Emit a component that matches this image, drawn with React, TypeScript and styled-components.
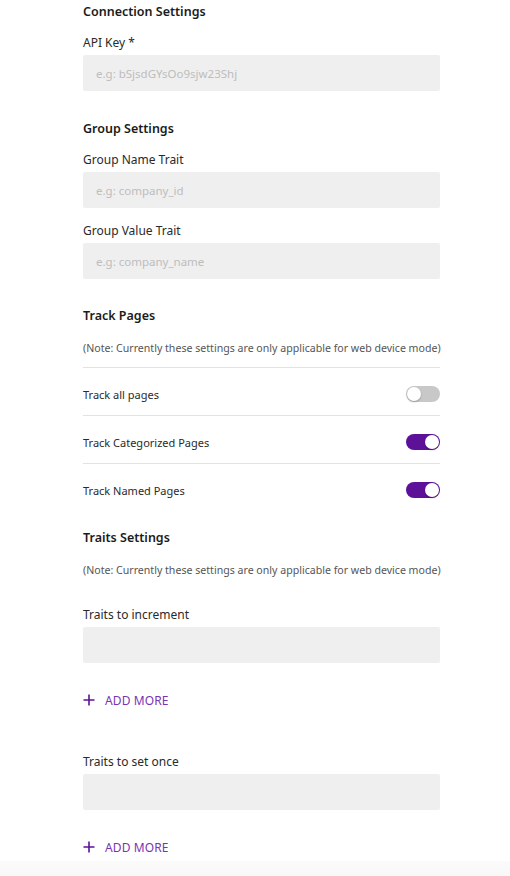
import React, { useState } from "react";
import styled, { createGlobalStyle } from "styled-components";

const Global = createGlobalStyle`
  html, body { margin: 0; padding: 0; background: #fff; }
  body { font-family: "Noto Sans", "Open Sans", sans-serif; color: #222; }
  * { box-sizing: border-box; }
`;

const Page = styled.div`
  width: 510px;
  min-height: 876px;
  display: flex;
  flex-direction: column;
`;

const Content = styled.div`
  flex: 1;
  padding: 2px 0 4px 83px;
  width: 440px;
  display: flex;
  flex-direction: column;
`;

const Footer = styled.div`
  height: 15px;
  background: linear-gradient(#fbfbfb, #f8f8f8);
`;

const SectionTitle = styled.div<{ $mt?: number }>`
  font-size: 12.5px;
  font-weight: 600;
  line-height: 20px;
  color: #1b1b1b;
  margin-top: ${(p) => p.$mt ?? 0}px;
`;

const Label = styled.div<{ $mt?: number }>`
  font-size: 12px;
  line-height: 20px;
  color: #2a2a2a;
  margin-top: ${(p) => p.$mt ?? 0}px;
  margin-bottom: 2px;
`;

const Input = styled.input`
  display: block;
  width: 357px;
  height: 36px;
  border: none;
  outline: none;
  background: #efefef;
  border-radius: 2px;
  padding: 0 13px;
  font-family: inherit;
  font-size: 11.5px;
  color: #333;
  &::placeholder { color: #bdbdbd; }
`;

const Note = styled.div<{ $mt?: number }>`
  font-size: 10.6px;
  line-height: 20px;
  color: #555;
  margin-top: ${(p) => p.$mt ?? 0}px;
  white-space: nowrap;
`;

const ToggleList = styled.div`
  margin-top: 9px;
  width: 357px;
  display: flex;
  flex-direction: column;
`;

const ToggleRow = styled.div`
  display: flex;
  align-items: center;
  justify-content: space-between;
  border-top: 1px solid #e2e2e2;
  padding: 18px 0 13px;
  height: 48px;
  font-size: 11px;
  color: #2a2a2a;
`;

const Track = styled.button<{ $on: boolean }>`
  position: relative;
  width: 34px;
  height: 16px;
  border: none;
  padding: 0;
  border-radius: 8px;
  cursor: pointer;
  background: ${(p) => (p.$on ? "#5d1199" : "#c8c8c8")};
`;

const Knob = styled.span<{ $on: boolean }>`
  position: absolute;
  top: 1px;
  left: ${(p) => (p.$on ? "19px" : "1px")};
  width: 14px;
  height: 14px;
  border-radius: 50%;
  background: #fff;
  box-shadow: 0 1px 2px rgba(0, 0, 0, 0.25);
`;

const AddMore = styled.button<{ $mt?: number }>`
  display: flex;
  align-items: center;
  gap: 10px;
  height: 20px;
  margin-top: ${(p) => p.$mt ?? 0}px;
  padding: 0;
  border: none;
  background: none;
  font-family: inherit;
  font-size: 12px;
  color: #7a33b3;
  cursor: pointer;
  letter-spacing: 0.1px;
`;

const PlusIcon = () => (
  <svg width="12" height="12" viewBox="0 0 12 12" aria-hidden>
    <path d="M6 0.5V11.5M0.5 6H11.5" stroke="#5d1199" strokeWidth="1.6" />
  </svg>
);

const Toggle = ({ initial }: { initial: boolean }) => {
  const [on, setOn] = useState(initial);
  return (
    <Track $on={on} onClick={() => setOn(!on)} aria-pressed={on}>
      <Knob $on={on} />
    </Track>
  );
};

export default function App() {
  return (
    <Page>
      <Global />
      <Content>
        <SectionTitle>Connection Settings</SectionTitle>
        <Label $mt={11}>API Key *</Label>
        <Input placeholder="e.g: bSjsdGYsOo9sjw23Shj" />

        <SectionTitle $mt={28}>Group Settings</SectionTitle>
        <Label $mt={11}>Group Name Trait</Label>
        <Input placeholder="e.g: company_id" />
        <Label $mt={13}>Group Value Trait</Label>
        <Input placeholder="e.g: company_name" />

        <SectionTitle $mt={27}>Track Pages</SectionTitle>
        <Note $mt={12}>(Note: Currently these settings are only applicable for web device mode)</Note>
        <ToggleList>
          <ToggleRow>
            <span>Track all pages</span>
            <Toggle initial={false} />
          </ToggleRow>
          <ToggleRow>
            <span>Track Categorized Pages</span>
            <Toggle initial={true} />
          </ToggleRow>
          <ToggleRow>
            <span>Track Named Pages</span>
            <Toggle initial={true} />
          </ToggleRow>
        </ToggleList>

        <SectionTitle $mt={17}>Traits Settings</SectionTitle>
        <Note $mt={12}>(Note: Currently these settings are only applicable for web device mode)</Note>
        <Label $mt={25}>Traits to increment</Label>
        <Input />
        <AddMore $mt={27}>
          <PlusIcon />
          ADD MORE
        </AddMore>

        <Label $mt={42}>Traits to set once</Label>
        <Input />
        <AddMore $mt={27}>
          <PlusIcon />
          ADD MORE
        </AddMore>
      </Content>
      <Footer />
    </Page>
  );
}
